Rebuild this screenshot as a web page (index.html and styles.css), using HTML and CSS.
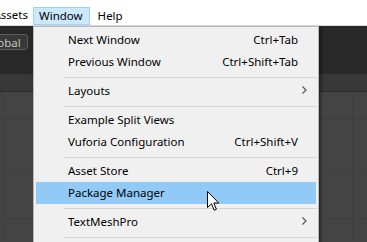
FILE: index.html
```html
<!DOCTYPE html>
<html lang="en">
<head>
    <meta charset="UTF-8">
    <title>Window menu</title>
    <link rel="stylesheet" href="styles.css">
</head>
<body>
    <nav class="menubar">
        <div class="menubar-item assets"><span>Assets</span></div>
        <div class="menubar-item active">Window</div>
        <div class="menubar-item">Help</div>
    </nav>

    <div class="toolbar">
        <button class="layer-btn"><span>Global</span></button>
    </div>
    <div class="tabbar"></div>
    <div class="canvas"></div>

    <div class="dropdown">
        <div class="item"><span class="label">Next Window</span><span class="key">Ctrl+Tab</span></div>
        <div class="item"><span class="label">Previous Window</span><span class="key">Ctrl+Shift+Tab</span></div>
        <div class="sep"></div>
        <div class="item"><span class="label">Layouts</span><svg class="sub" width="5" height="8" viewBox="0 0 5 8"><path d="M0.5 0.5 L4 4 L0.5 7.5" fill="none" stroke="#505050" stroke-width="1.1"/></svg></div>
        <div class="sep"></div>
        <div class="item"><span class="label">Example Split Views</span></div>
        <div class="item"><span class="label">Vuforia Configuration</span><span class="key">Ctrl+Shift+V</span></div>
        <div class="sep"></div>
        <div class="item"><span class="label">Asset Store</span><span class="key">Ctrl+9</span></div>
        <div class="item selected"><span class="label">Package Manager</span></div>
        <div class="sep"></div>
        <div class="item"><span class="label">TextMeshPro</span><svg class="sub" width="5" height="8" viewBox="0 0 5 8"><path d="M0.5 0.5 L4 4 L0.5 7.5" fill="none" stroke="#505050" stroke-width="1.1"/></svg></div>
        <div class="sep"></div>
    </div>

    <svg class="cursor" width="13" height="21" viewBox="0 0 13 21">
        <path d="M0.5 0.5 L0.5 16.5 L4.5 12.8 L7.2 19.2 L9.4 18.3 L6.8 12 L11.8 12 Z" fill="#fff" stroke="#000" stroke-width="1" stroke-linejoin="miter"/>
    </svg>
</body>
</html>
```

FILE: styles.css
```css
body {
    margin: 0;
    width: 367px;
    height: 242px;
    overflow: hidden;
    position: relative;
    font-family: "Noto Sans", "Open Sans", sans-serif;
    font-size: 11.5px;
    background-color: #444;
}
.menubar {
    height: 26px;
    background-color: #fff;
    border-bottom: 1px solid #dadada;
    display: flex;
    align-items: flex-start;
    box-sizing: border-box;
}
.menubar-item {
    margin-top: 7px;
    height: 18px;
    line-height: 15px;
    padding: 0 6px 0 7px;
    color: #000;
    border: 1px solid transparent;
    box-sizing: border-box;
    white-space: nowrap;
}
.menubar-item.assets {
    width: 33px;
    padding: 0 5px 0 0;
    display: flex;
    justify-content: flex-end;
    border: none;
}
.menubar-item.active {
    background-color: #cce8ff;
    border-color: #99d1ff;
    padding: 0 6px 0 5px;
}
.toolbar {
    height: 48px;
    background-color: #282828;
    padding-top: 8px;
    box-sizing: border-box;
}
.layer-btn {
    margin-left: -19px;
    height: 16px;
    width: 47px;
    padding: 0 0 0 4px;
    background-color: #383838;
    border: 1px solid #5d5d5d;
    border-radius: 3px;
    color: #c4c4c4;
    font-family: "Noto Sans", sans-serif;
    font-size: 11.5px;
    line-height: 13px;
    text-align: left;
}
.tabbar {
    height: 17px;
    background-color: #383838;
    border-bottom: 1px solid #2c2c2c;
}
.canvas {
    height: 149px;
    background-color: #444;
    background-image:
        linear-gradient(to right, rgba(0, 0, 0, 0.07) 1px, transparent 1px),
        linear-gradient(to bottom, rgba(0, 0, 0, 0.07) 1px, transparent 1px);
    background-size: 50px 50px;
    background-position: 2px 27px;
}
.dropdown {
    position: absolute;
    left: 33px;
    top: 26px;
    width: 286px;
    height: 216px;
    overflow: hidden;
    background-color: #f0f0f0;
    border: 1px solid #b9b9b9;
    border-bottom: none;
    box-sizing: border-box;
    padding-top: 2px;
    box-shadow: 2px 2px 3px rgba(0, 0, 0, 0.45);
}
.item {
    height: 22px;
    margin: 0 2px;
    padding: 0 18px 2px 32px;
    box-sizing: border-box;
    display: flex;
    align-items: center;
    color: #000;
    white-space: nowrap;
}
.item .label {
    flex: 1;
}
.item .sub {
    margin-right: -9px;
}
.item.selected {
    background-color: #91c9f7;
}
.sep {
    height: 1px;
    background-color: #d4d4d4;
    margin: 4px 1px 2px 30px;
}
.cursor {
    position: absolute;
    left: 207px;
    top: 191px;
}
```
